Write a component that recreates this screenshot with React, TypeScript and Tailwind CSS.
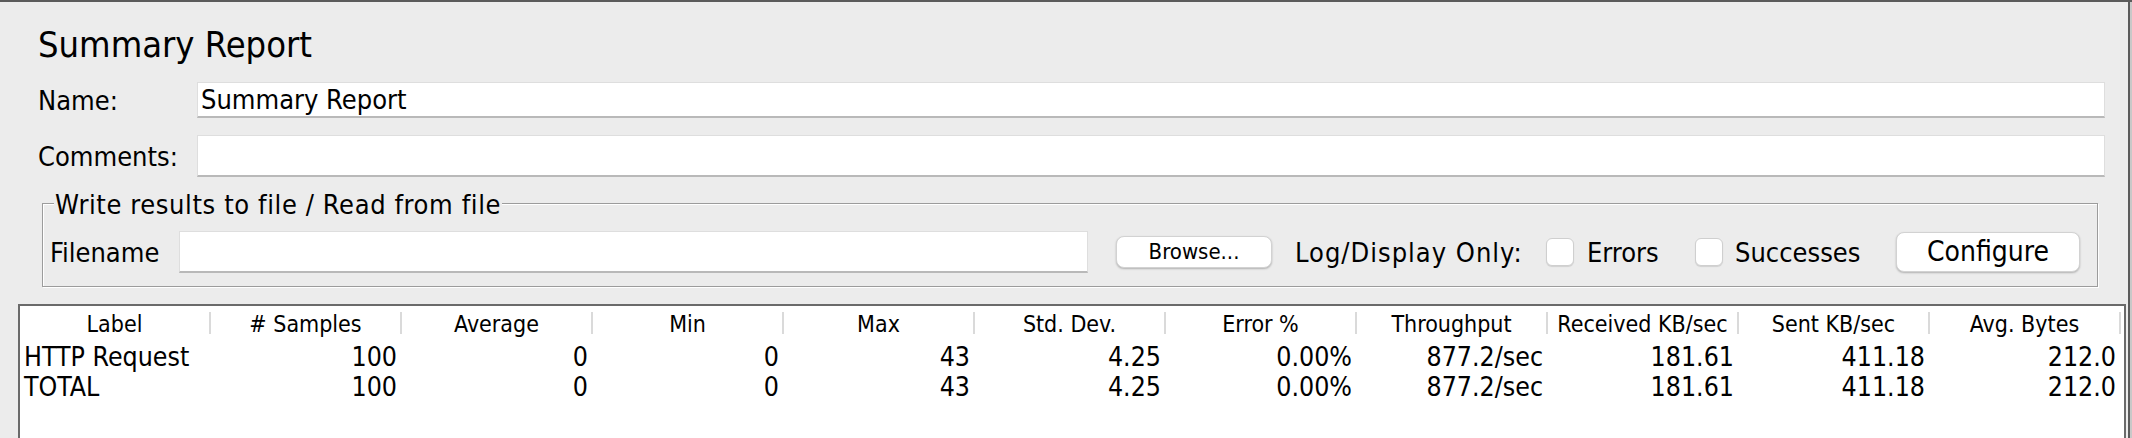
const cols = [
  "Label",
  "# Samples",
  "Average",
  "Min",
  "Max",
  "Std. Dev.",
  "Error %",
  "Throughput",
  "Received KB/sec",
  "Sent KB/sec",
  "Avg. Bytes",
];

const vals = ["100", "0", "0", "43", "4.25", "0.00%", "877.2/sec", "181.61", "411.18", "212.0"];
const rows = [
  ["HTTP Request", ...vals],
  ["TOTAL", ...vals],
];

function Checkbox() {
  return (
    <div className="w-[28px] h-[28px] rounded-[6px] bg-white border border-[#cfcfcf] shadow-[0_1px_1px_rgba(0,0,0,0.12)]" />
  );
}

export default function App() {
  return (
    <div className="w-[2132px] h-[438px] overflow-hidden bg-[#ececec] border-t-2 border-[#5b5b5b] flex font-['DejaVu_Sans_Condensed','Lato',sans-serif] text-black">
      <div className="flex-1 flex flex-col min-w-0">
        {/* Title */}
        <div className="mt-[21px] h-[44px] pl-[38px] flex items-center text-[36px] leading-none whitespace-nowrap">
          Summary Report
        </div>

        {/* Name */}
        <div className="mt-[15px] h-[36px] flex items-center text-[27px] leading-none">
          <div className="w-[197px] pl-[38px]">Name:</div>
          <div className="flex-1 mr-[23px] h-full bg-white border border-[#dedede] border-b-2 border-b-[#b9b9b9] flex items-center pl-[3px] whitespace-nowrap">
            Summary Report
          </div>
        </div>

        {/* Comments */}
        <div className="mt-[17px] h-[42px] flex items-center text-[27px] leading-none">
          <div className="w-[197px] pl-[38px]">Comments:</div>
          <div className="flex-1 mr-[23px] h-full bg-white border border-[#dedede] border-b-2 border-b-[#b9b9b9]" />
        </div>

        {/* Group box */}
        <div className="mt-[26px] ml-[42px] mr-[30px] h-[84px] relative border border-[#9c9c9c] shadow-[inset_1px_1px_0_#ffffff,1px_1px_0_#ffffff] pt-[27px] pl-[7px] flex items-start text-[27px] leading-none">
          <span className="absolute left-[11px] top-0 -translate-y-1/2 bg-[#ececec] px-[1px] whitespace-nowrap tracking-[0.6px]">
            Write results to file / Read from file
          </span>
          <div className="h-[42px] flex items-center">
            <div className="w-[129px] whitespace-nowrap">Filename</div>
            <div className="w-[909px] h-full bg-white border border-[#dedede] border-b-2 border-b-[#b9b9b9]" />
            <button className="ml-[28px] w-[156px] h-[32px] rounded-[8px] bg-white border border-[#d2d2d2] shadow-[0_1px_2px_rgba(0,0,0,0.25)] text-[22px] leading-none flex items-center justify-center">
              Browse...
            </button>
            <div className="ml-[23px] w-[227px] whitespace-nowrap tracking-[1px]">Log/Display Only:</div>
            <div className="ml-[24px]">
              <Checkbox />
            </div>
            <div className="ml-[13px] w-[72px] whitespace-nowrap">Errors</div>
            <div className="ml-[36px]">
              <Checkbox />
            </div>
            <div className="ml-[12px] w-[125px] whitespace-nowrap">Successes</div>
            <button className="ml-[36px] w-[184px] h-[40px] rounded-[8px] bg-white border border-[#d2d2d2] shadow-[0_1px_2px_rgba(0,0,0,0.25)] text-[28px] leading-none flex items-center justify-center">
              Configure
            </button>
          </div>
        </div>

        {/* Table */}
        <div className="mt-[17px] ml-[18px] mr-[2px] flex-1 bg-white border-l-2 border-t-2 border-r-2 border-[#6a6a6a] text-[26.5px] leading-none">
          <div className="grid grid-cols-[repeat(11,191px)] h-[36px] text-[23px]">
            {cols.map((c) => (
              <div key={c} className="flex items-start h-full">
                <div className="flex-1 h-full flex items-center justify-center whitespace-nowrap">{c}</div>
                <div className="w-[2px] h-[22px] mt-[6px] bg-[#dadada]" />
              </div>
            ))}
          </div>
          {rows.map((r, i) => (
            <div key={i} className="grid grid-cols-[repeat(11,191px)] h-[30px]">
              {r.map((v, j) => (
                <div
                  key={j}
                  className={
                    j === 0
                      ? "flex items-center pl-[4px] whitespace-nowrap"
                      : "flex items-center justify-end pr-[5px] whitespace-nowrap"
                  }
                >
                  {v}
                </div>
              ))}
            </div>
          ))}
        </div>
      </div>
      <div className="w-[2px] bg-[#5b5b5b]" />
      <div className="w-[2px] bg-[#c8c8c8]" />
    </div>
  );
}
